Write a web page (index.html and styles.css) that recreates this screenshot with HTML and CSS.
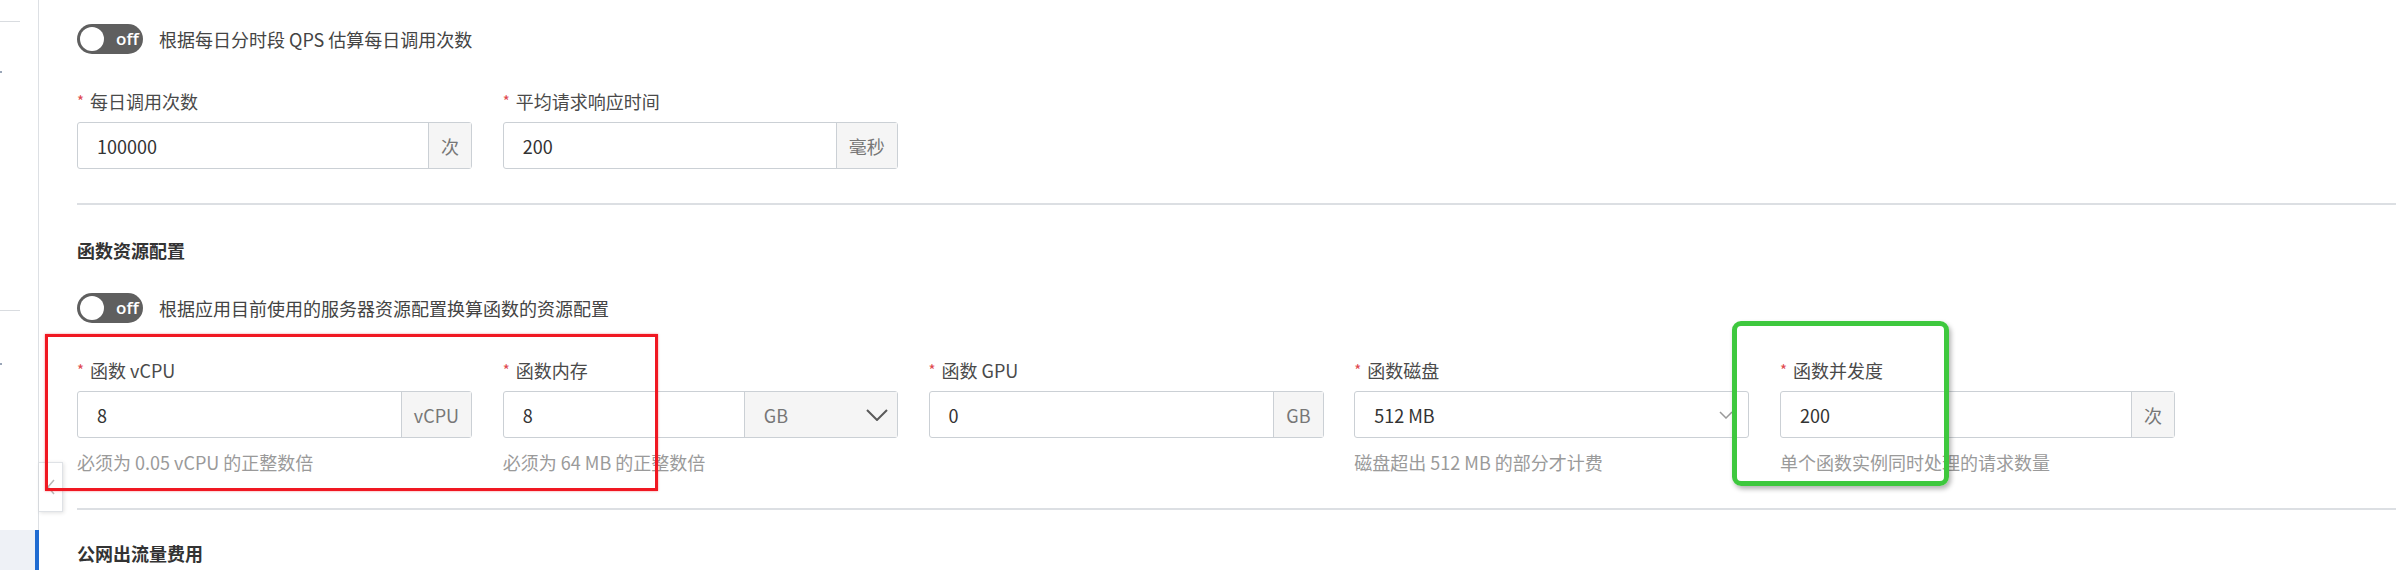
FILE: index.html
```html
<!DOCTYPE html>
<html lang="zh-CN">
<head>
<meta charset="utf-8">
<title>函数资源配置</title>
<link rel="stylesheet" href="styles.css">
</head>
<body>
<div class="page">
  <aside class="sidebar">
    <div class="nav-line nav-line-1"></div>
    <div class="nav-dot nav-dot-1"></div>
    <div class="nav-line nav-line-2"></div>
    <div class="nav-dot nav-dot-2"></div>
    <div class="nav-active"></div>
  </aside>

  <main class="main">
    <section class="section">
      <div class="switch-row">
        <span class="switch"><span class="knob"></span><span class="switch-text">off</span></span>
        <span class="switch-label">根据每日分时段 QPS 估算每日调用次数</span>
      </div>
      <div class="fields">
        <div class="field">
          <div class="label"><span class="req">*</span>每日调用次数</div>
          <div class="input-group">
            <span class="input">100000</span>
            <span class="addon">次</span>
          </div>
        </div>
        <div class="field">
          <div class="label"><span class="req">*</span>平均请求响应时间</div>
          <div class="input-group">
            <span class="input">200</span>
            <span class="addon">毫秒</span>
          </div>
        </div>
      </div>
    </section>

    <div class="divider"></div>

    <section class="section">
      <h3 class="heading">函数资源配置</h3>
      <div class="switch-row switch-row-2">
        <span class="switch"><span class="knob"></span><span class="switch-text">off</span></span>
        <span class="switch-label">根据应用目前使用的服务器资源配置换算函数的资源配置</span>
      </div>
      <div class="fields">
        <div class="field">
          <div class="label"><span class="req">*</span>函数 vCPU</div>
          <div class="input-group">
            <span class="input">8</span>
            <span class="addon">vCPU</span>
          </div>
          <div class="help">必须为 0.05 vCPU 的正整数倍</div>
        </div>
        <div class="field">
          <div class="label"><span class="req">*</span>函数内存</div>
          <div class="input-group">
            <span class="input">8</span>
            <span class="addon-select">
              <span>GB</span>
              <svg class="chev-dark" width="22" height="12" viewBox="0 0 22 12"><polyline points="1,1 11,11 21,1" fill="none" stroke="#5a5a5a" stroke-width="2"/></svg>
            </span>
          </div>
          <div class="help">必须为 64 MB 的正整数倍</div>
        </div>
        <div class="field">
          <div class="label"><span class="req">*</span>函数 GPU</div>
          <div class="input-group">
            <span class="input">0</span>
            <span class="addon">GB</span>
          </div>
        </div>
        <div class="field">
          <div class="label"><span class="req">*</span>函数磁盘</div>
          <div class="input-group select">
            <span class="input">512 MB</span>
            <svg class="chev-light" width="14" height="8" viewBox="0 0 14 8"><polyline points="1,1 7,7 13,1" fill="none" stroke="#9a9a9a" stroke-width="1.5"/></svg>
          </div>
          <div class="help">磁盘超出 512 MB 的部分才计费</div>
        </div>
        <div class="field">
          <div class="label"><span class="req">*</span>函数并发度</div>
          <div class="input-group">
            <span class="input">200</span>
            <span class="addon">次</span>
          </div>
          <div class="help">单个函数实例同时处理的请求数量</div>
        </div>
      </div>
    </section>

    <div class="divider"></div>

    <div class="section-bottom">
      <h3 class="heading heading-last">公网出流量费用</h3>
    </div>
  </main>

  <div class="collapse-btn">
    <svg width="8" height="16" viewBox="0 0 8 16"><polyline points="7,1 1,8 7,15" fill="none" stroke="#b8b8b8" stroke-width="1.5"/></svg>
  </div>
  <div class="mark mark-red"></div>
  <div class="mark mark-green"></div>
</div>
</body>
</html>
```

FILE: styles.css
```css
html, body {
  margin: 0;
  padding: 0;
  background: #ffffff;
}

body {
  font-family: "Noto Sans CJK SC", "Noto Sans", sans-serif;
  font-size: 18px;
  color: #333;
  overflow: hidden;
}

.page {
  position: relative;
  display: flex;
  width: 2396px;
  height: 570px;
  overflow: hidden;
}

/* sidebar */
.sidebar {
  width: 38px;
  flex: none;
  border-right: 1px solid #dde0e4;
  display: flex;
  flex-direction: column;
}

.nav-line {
  width: 20px;
  height: 1px;
  background: #d9dce0;
}

.nav-line-1 { margin-top: 21px; }
.nav-line-2 { margin-top: 237px; }

.nav-dot {
  width: 2px;
  height: 2px;
  background: #9aa6b8;
}

.nav-dot-1 { margin-top: 49px; }
.nav-dot-2 { margin-top: 52px; }

.nav-active {
  margin-top: 165px;
  height: 40px;
  width: 35px;
  margin-right: -1px;
  background: #eef1f6;
  border-right: 4px solid #1f6bd1;
}

/* main */
.main {
  flex: 1;
  padding-top: 24px;
}

.section {
  padding-left: 38px;
  padding-bottom: 34px;
}

.section-bottom {
  padding-left: 38px;
}

.switch-row {
  display: flex;
  align-items: center;
  height: 30px;
}

.switch-row-2 {
  margin-top: 31px;
}

.switch {
  width: 66px;
  height: 30px;
  border-radius: 15px;
  background: #5f5f5f;
  display: flex;
  align-items: center;
  flex: none;
}

.knob {
  width: 24px;
  height: 24px;
  border-radius: 50%;
  background: #fff;
  margin-left: 3px;
}

.switch-text {
  margin-left: 12px;
  color: #fff;
  font-size: 17px;
  font-weight: 600;
  line-height: 30px;
  font-family: "Open Sans", "Noto Sans", sans-serif;
}

.switch-label {
  margin-left: 16px;
  color: #444;
  line-height: 30px;
}

.fields {
  margin-top: 35px;
  display: grid;
  grid-template-columns: repeat(5, 395px);
  column-gap: 30.75px;
}

.label {
  line-height: 24px;
  height: 24px;
  color: #4a4a4a;
  margin-bottom: 9px;
  display: flex;
  align-items: center;
}

.req {
  display: inline-block;
  width: 8px;
  margin-right: 5px;
  color: #e0484e;
  font-size: 15px;
}

.input-group {
  height: 47px;
  box-sizing: border-box;
  border: 1px solid #cbd0d5;
  border-radius: 3px;
  display: flex;
  align-items: stretch;
  background: #fff;
}

.input {
  flex: 1;
  display: flex;
  align-items: center;
  padding-left: 19px;
  color: #333;
}

.addon {
  display: flex;
  align-items: center;
  padding: 0 12px;
  background: #f5f5f5;
  border-left: 1px solid #cbd0d5;
  color: #777;
}

.addon-select {
  width: 153px;
  box-sizing: border-box;
  display: flex;
  align-items: center;
  justify-content: space-between;
  padding: 0 9px 0 19px;
  background: #f5f5f5;
  border-left: 1px solid #cbd0d5;
  color: #777;
}

.select {
  align-items: center;
  padding-right: 15px;
}

.chev-light {
  flex: none;
}

.help {
  margin-top: 12px;
  line-height: 24px;
  color: #9a9a9a;
}

.divider {
  height: 2px;
  background: #dcdfe3;
  margin-left: 38px;
}

.heading {
  margin: 33px 0 0;
  line-height: 24px;
  font-size: 18px;
  font-weight: 700;
  color: #333;
}

.heading-last {
  margin-top: 31px;
}

/* collapse handle */
.collapse-btn {
  position: absolute;
  left: 39px;
  top: 462px;
  width: 24px;
  height: 50px;
  box-sizing: border-box;
  background: #fff;
  border: 1px solid #dfe2e6;
  border-left: none;
  box-shadow: 1px 1px 4px rgba(0, 0, 0, 0.12);
  display: flex;
  align-items: center;
  justify-content: center;
}

/* annotation marks */
.mark {
  position: absolute;
  box-sizing: border-box;
  pointer-events: none;
}

.mark-red {
  left: 45px;
  top: 334px;
  width: 613px;
  height: 157px;
  border: 3px solid #f01822;
  box-shadow: 0 0 2px rgba(240, 24, 34, 0.5);
}

.mark-green {
  left: 1732px;
  top: 321px;
  width: 217px;
  height: 165px;
  border: 5px solid #3ec83e;
  border-radius: 9px;
  box-shadow: 2px 3px 5px rgba(0, 0, 0, 0.3);
}
```
